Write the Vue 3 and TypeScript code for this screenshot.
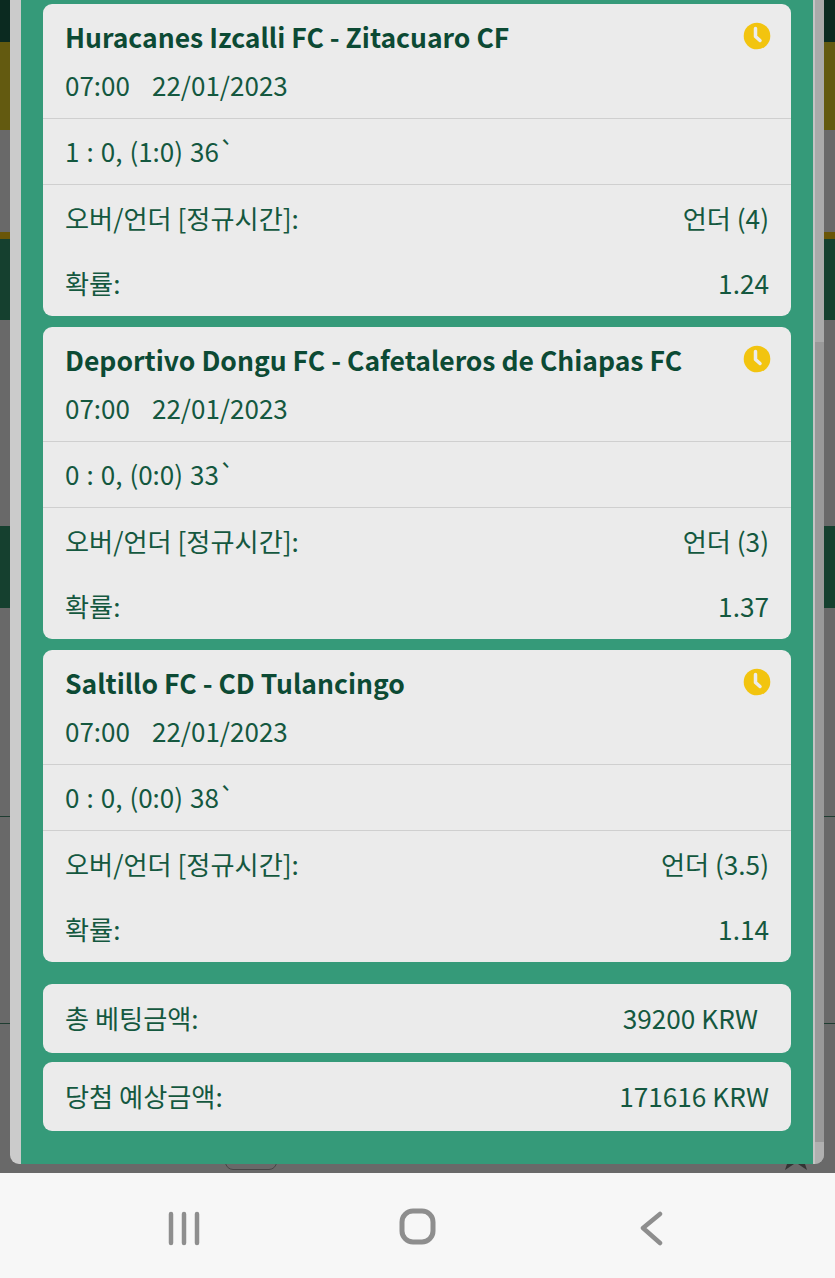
<template>
  <div class="screen">
    <div class="page">
      <div class="band band-dark" style="height: 42px"></div>
      <div class="band band-olive" style="height: 88px"></div>
      <div class="band band-gray" style="height: 102px"></div>
      <div class="band band-brown" style="height: 7px"></div>
      <div class="band band-green" style="height: 81px"></div>
      <div class="band band-gray" style="height: 206px"></div>
      <div class="band band-green" style="height: 82px"></div>
      <div class="band band-gray band-line" style="height: 209px"></div>
      <div class="band band-gray band-line" style="height: 207px"></div>
      <div class="band band-gray band-last">
        <span class="peek-button"></span>
        <svg class="peek-star" width="24" height="6" viewBox="0 0 24 6">
          <path d="M1 6 L3 0 H10 Z M23 6 L21 0 H14 Z" fill="#333333" />
        </svg>
      </div>
    </div>

    <div class="modal">
      <div class="gutter"></div>
      <div class="content">
        <div v-for="bet in bets" :key="bet.teams" class="card">
          <div class="card-head">
            <div class="title-row">
              <span class="teams">{{ bet.teams }}</span>
              <svg class="clock" width="28" height="28" viewBox="0 0 28 28">
                <circle cx="14" cy="14" r="13.3" fill="#f2c40f" />
                <path d="M12.5 6.5 V14.5 L17 18.5" fill="none" stroke="#ececec" stroke-width="3.5" stroke-linecap="round" stroke-linejoin="round" />
              </svg>
            </div>
            <div class="kickoff"><span>07:00</span><span>22/01/2023</span></div>
          </div>
          <div class="score">{{ bet.score }}</div>
          <div class="details">
            <div class="line"><span>오버/언더 [정규시간]:</span><span>{{ bet.pick }}</span></div>
            <div class="line"><span>확률:</span><span>{{ bet.odds }}</span></div>
          </div>
        </div>

        <div class="totals">
          <div class="card total"><span>총 베팅금액:</span><span class="stake">39200 KRW</span></div>
          <div class="card total"><span>당첨 예상금액:</span><span>171616 KRW</span></div>
        </div>
      </div>
      <div class="scrollbar">
        <div class="track-top"></div>
        <div class="track-thumb"></div>
        <div class="track-end"></div>
      </div>
    </div>

    <div class="navbar">
      <svg width="40" height="40" viewBox="0 0 40 40">
        <path d="M7 8 V37 M20 8 V37 M33 8 V37" stroke="#8e8e8e" stroke-width="4.5" stroke-linecap="round" />
      </svg>
      <svg width="40" height="40" viewBox="0 0 40 40">
        <rect x="4" y="5" width="31" height="31" rx="11" fill="none" stroke="#8e8e8e" stroke-width="5" />
      </svg>
      <svg width="40" height="40" viewBox="0 0 40 40">
        <path d="M28 8 L11 22 L28 37" fill="none" stroke="#8e8e8e" stroke-width="4.5" stroke-linecap="round" stroke-linejoin="round" />
      </svg>
    </div>
  </div>
</template>

<script setup lang="ts">
interface Bet {
  teams: string
  score: string
  pick: string
  odds: string
}

const bets: Bet[] = [
  { teams: 'Huracanes Izcalli FC - Zitacuaro CF', score: '1 : 0, (1:0) 36`', pick: '언더 (4)', odds: '1.24' },
  { teams: 'Deportivo Dongu FC - Cafetaleros de Chiapas FC', score: '0 : 0, (0:0) 33`', pick: '언더 (3)', odds: '1.37' },
  { teams: 'Saltillo FC - CD Tulancingo', score: '0 : 0, (0:0) 38`', pick: '언더 (3.5)', odds: '1.14' }
]
</script>

<style>
html,
body {
  margin: 0;
  background: #f7f7f7;
}
</style>

<style scoped>
.screen {
  position: relative;
  width: 835px;
  height: 1278px;
  overflow: hidden;
  font-family: "Noto Sans CJK KR", "Noto Sans", sans-serif;
  color: #14583f;
}

.page {
  height: 1173px;
  display: flex;
  flex-direction: column;
}

.band {
  flex-shrink: 0;
  box-sizing: border-box;
}

.band-dark {
  background: #0b2a20;
}

.band-olive {
  background: #635a10;
}

.band-brown {
  background: #6a5608;
}

.band-green {
  background: #15402f;
}

.band-gray {
  background: #696969;
}

.band-line {
  border-bottom: 1px solid #1f3d31;
}

.band-last {
  position: relative;
  flex: 1;
}

.peek-button {
  position: absolute;
  left: 225px;
  bottom: 3px;
  width: 52px;
  height: 12px;
  box-sizing: border-box;
  border: 1px solid #464646;
  border-radius: 0 0 8px 8px;
}

.peek-star {
  position: absolute;
  left: 784px;
  bottom: 3px;
}

.modal {
  position: absolute;
  top: 0;
  left: 10px;
  width: 814px;
  height: 1164px;
  display: flex;
  overflow: hidden;
  border-radius: 0 0 9px 9px;
}

.gutter {
  width: 11px;
  background: #cbcbcb;
}

.content {
  width: 792px;
  box-sizing: border-box;
  padding: 4px 22px 0;
  background: #359a79;
  display: flex;
  flex-direction: column;
  gap: 11px;
}

.card {
  background: #ebebeb;
  border-radius: 9px;
}

.card-head {
  height: 115px;
  box-sizing: border-box;
  padding: 13px 22px 0;
  border-bottom: 1px solid #cfcfcf;
}

.title-row {
  display: flex;
  justify-content: space-between;
  align-items: flex-start;
}

.teams {
  font-size: 26.5px;
  font-weight: 700;
  line-height: 40px;
  color: #0c4a34;
}

.clock {
  flex-shrink: 0;
  margin: 5px -2px 0 0;
}

.kickoff {
  display: flex;
  gap: 22px;
  margin-top: 8px;
  font-size: 26px;
  line-height: 40px;
}

.score {
  height: 66px;
  box-sizing: border-box;
  padding: 0 22px;
  font-size: 26px;
  line-height: 64px;
  word-spacing: 1.2px;
  border-bottom: 1px solid #cfcfcf;
}

.details {
  height: 131px;
  box-sizing: border-box;
  padding: 0 22px;
  display: flex;
  flex-direction: column;
}

.line {
  flex: 1;
  display: flex;
  justify-content: space-between;
  align-items: center;
  font-size: 26.2px;
}

.totals {
  margin-top: 11px;
  display: flex;
  flex-direction: column;
  gap: 9px;
}

.total {
  height: 69px;
  box-sizing: border-box;
  padding: 0 22px 2px;
  display: flex;
  justify-content: space-between;
  align-items: center;
  font-size: 26.2px;
}

.stake {
  padding-right: 11px;
}

.scrollbar {
  width: 11px;
  display: flex;
  flex-direction: column;
  background: #9a9a9a;
  border-left: 2px solid #c4c4c4;
  box-sizing: border-box;
}

.track-top {
  height: 342px;
  background: #aaaaaa;
}

.track-thumb {
  flex: 1;
  background: #999999;
}

.track-end {
  height: 22px;
  background: #b0b0b0;
}

.navbar {
  height: 105px;
  background: #f7f7f7;
  display: flex;
  justify-content: center;
  align-items: center;
  gap: 194px;
}
</style>
